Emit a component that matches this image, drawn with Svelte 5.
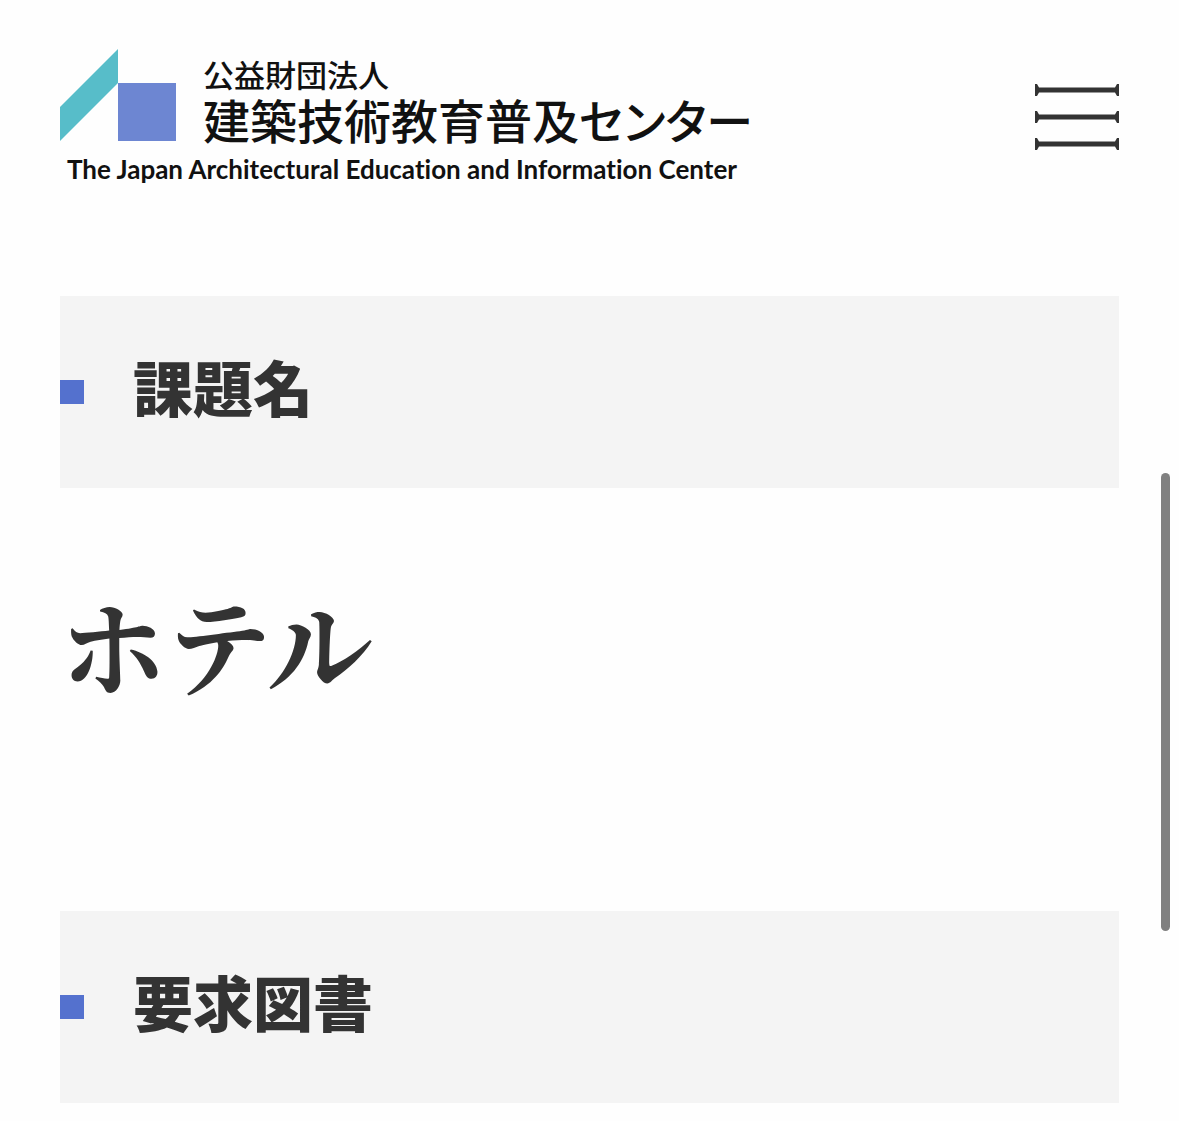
<script lang="ts">
const sections = [
  { id: 'theme', title: '課題名', body: 'ホテル' },
  { id: 'documents', title: '要求図書', body: '' }
]
const bars = [6, 33, 60]
let menuOpen = $state(false)
</script>

<div class="page">
  <header class="header">
    <a class="logo" href="/">
      <span class="logo__top">
        <svg class="logo__mark" viewBox="0 0 116 92" aria-hidden="true">
          <path d="M0 58 58 0v34L0 92z" fill="#57bdc9" />
          <path d="M58 34h58v58H58z" fill="#6d86d2" />
        </svg>
        <span class="logo__names">
          <span class="logo__type">公益財団法人</span>
          <span class="logo__name">建築技術教育普及センター</span>
        </span>
      </span>
      <span class="logo__english">The Japan Architectural Education and Information Center</span>
    </a>
    <button
      type="button"
      class="menu"
      aria-label="メニュー"
      aria-expanded={menuOpen}
      onclick={() => (menuOpen = !menuOpen)}
    >
      <svg class="menu__icon" viewBox="0 0 84 66" aria-hidden="true">
        {#each bars as y}
          <path
            transform="translate(0 {y})"
            d="M0-6h2l2 3.5h76l2-3.5h2V6h-2l-2-3.5H4L2 6H0z"
          />
        {/each}
      </svg>
    </button>
  </header>

  <main class="main">
    {#each sections as section (section.id)}
      <section class="section" aria-labelledby={section.id}>
        <h2 class="section__title" id={section.id}>{section.title}</h2>
        {#if section.body}
          <p class="section__body">{section.body}</p>
        {/if}
      </section>
    {/each}
  </main>
  <div class="scroll-thumb"></div>
</div>

<style>
:global(body) {
  margin: 0;
  background: #fefefe;
}

.page {
  font-family: 'Liberation Sans', 'Noto Sans CJK JP', sans-serif;
  color: #333;
}

.header {
  display: flex;
  justify-content: space-between;
  align-items: flex-start;
  padding: 49px 60px 0;
}

.logo {
  display: flex;
  flex-direction: column;
  color: #111;
  text-decoration: none;
  white-space: nowrap;
}

.logo__top {
  display: flex;
  align-items: flex-start;
  gap: 27px;
}

.logo__mark {
  flex: none;
  width: 116px;
  height: 92px;
}

.logo__names {
  display: flex;
  flex-direction: column;
  padding-top: 9px;
}

.logo__type {
  font-size: 31px;
  font-weight: 500;
  line-height: 37px;
}

.logo__name {
  font-size: 47px;
  font-weight: 500;
  line-height: 56px;
  font-feature-settings: 'palt';
}

.logo__english {
  padding-left: 7px;
  font-family: Lato, sans-serif;
  font-size: 26px;
  font-weight: 700;
  font-variant-ligatures: none;
  line-height: 36px;
}

.menu {
  margin: 35px 0 0;
  border: 0;
  padding: 0;
  background: none;
  cursor: pointer;
}

.menu__icon {
  display: block;
  width: 84px;
  height: 66px;
  fill: #333;
}

.main {
  padding: 109px 60px 18px;
}

.section__title {
  display: flex;
  align-items: center;
  gap: 49px;
  margin: 0;
  padding: 60px 0;
  font-size: 60px;
  font-weight: 900;
  line-height: 72px;
  background: #f4f4f4;
}

.section__title::before {
  content: '';
  width: 24px;
  height: 24px;
  background: #5471ce;
}

.section__body {
  margin: 0;
  padding: 85px 0 178px;
  font-family: 'Liberation Serif', 'Noto Serif CJK JP', 'Noto Sans CJK JP', serif;
  font-size: 106px;
  font-weight: 700;
  line-height: 160px;
}

/* overlay scroll indicator at the right edge */
.scroll-thumb {
  position: fixed;
  top: 473px;
  right: 9px;
  width: 9px;
  height: 458px;
  border-radius: 5px;
  background: #808080;
}
</style>
